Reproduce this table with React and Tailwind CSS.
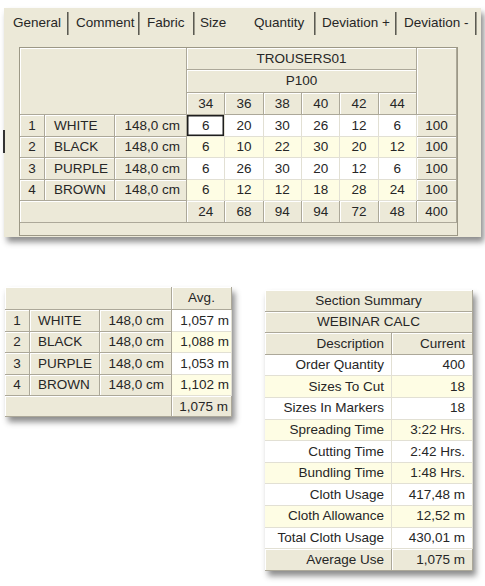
import React from 'react';

const sizes = ['34', '36', '38', '40', '42', '44'];

const rows = [
  { n: 1, name: 'WHITE', len: '148,0 cm', q: [6, 20, 30, 26, 12, 6], total: 100, avg: '1,057 m' },
  { n: 2, name: 'BLACK', len: '148,0 cm', q: [6, 10, 22, 30, 20, 12], total: 100, avg: '1,088 m' },
  { n: 3, name: 'PURPLE', len: '148,0 cm', q: [6, 26, 30, 20, 12, 6], total: 100, avg: '1,053 m' },
  { n: 4, name: 'BROWN', len: '148,0 cm', q: [6, 12, 12, 18, 28, 24], total: 100, avg: '1,102 m' },
];

const totals = [24, 68, 94, 94, 72, 48];

const summary = [
  ['Order Quantity', '400'],
  ['Sizes To Cut', '18'],
  ['Sizes In Markers', '18'],
  ['Spreading Time', '3:22 Hrs.'],
  ['Cutting Time', '2:42 Hrs.'],
  ['Bundling Time', '1:48 Hrs.'],
  ['Cloth Usage', '417,48 m'],
  ['Cloth Allowance', '12,52 m'],
  ['Total Cloth Usage', '430,01 m'],
];

const tabs = [
  { label: 'General', w: 'w-[54px]', ml: 'ml-0', sep: true },
  { label: 'Comment', w: 'w-[62px]', ml: 'ml-[7px]', sep: true },
  { label: 'Fabric', w: 'w-[46px]', ml: 'ml-[7px]', sep: true },
  { label: 'Size', w: 'w-[54px]', ml: 'ml-[5px]', sep: false },
  { label: 'Quantity', w: 'w-[60px]', ml: 'ml-0', sep: true },
  { label: 'Deviation +', w: 'w-[73px]', ml: 'ml-[6px]', sep: true },
  { label: 'Deviation -', w: 'w-[71px]', ml: 'ml-[7px]', sep: true },
];

const raised = 'bg-[#ECE9D8] border-r border-b border-[#ACA899] shadow-[inset_1px_1px_0_#ffffff] flex items-center';
const white = 'bg-white border-r border-b border-[#E2E0D4] flex items-center';
const yellow = 'bg-[#FEFDE4] border-r border-b border-[#E2E0D4] flex items-center';

const App = () => {
  return (
    <div className="relative w-[485px] h-[586px] bg-white overflow-hidden font-['Liberation_Sans',Arial,sans-serif] text-[13.5px] text-[#262626] leading-none">
      {/* caret left of the grid */}
      <div className="absolute left-[3px] top-[130px] w-[2px] h-[23px] bg-[#333]" />

      {/* quantity tab page */}
      <div className="ml-[4px] mt-[8px] w-[477px] bg-[#ECE9D8] shadow-[3px_5px_6px_rgba(0,0,0,0.45)] pb-[1px]">
        <div className="flex items-start h-[27px] pl-[9px] pt-[4px]">
          {tabs.map((t) => (
            <div key={t.label} className={`flex items-start ${t.ml}`}>
              <div className={`${t.w} h-[22px] flex items-center whitespace-nowrap`}>{t.label}</div>
              {t.sep && <div className="w-[2px] h-[23px] bg-[#5b5a52] border-r border-[#9b998c]" />}
            </div>
          ))}
        </div>

        <div className="ml-[15px] mt-[12px] w-[439px] border border-[#9c9886] grid grid-cols-[25px_70px_72px_repeat(6,38.33px)_40px] grid-rows-[22px_23px_22px_repeat(5,21.6px)_12px]">
          <div className={`${raised} col-span-3 row-span-3`} />
          <div className={`${raised} col-span-6 justify-center`}>TROUSERS01</div>
          <div className={`${raised} row-span-3`} />
          <div className={`${raised} col-span-6 justify-center`}>P100</div>
          {sizes.map((s) => (
            <div key={s} className={`${raised} justify-center`}>{s}</div>
          ))}

          {rows.map((r, i) => (
            <React.Fragment key={r.n}>
              <div className={`${raised} justify-center`}>{r.n}</div>
              <div className={`${raised} pl-[9px]`}>{r.name}</div>
              <div className={`${raised} justify-end pr-[6px]`}>{r.len}</div>
              {r.q.map((v, j) => (
                <div
                  key={j}
                  className={`${i % 2 === 0 ? white : yellow} justify-center ${
                    i === 0 && j === 0 ? 'shadow-[inset_0_0_0_1.5px_#1e1e1e]' : ''
                  }`}
                >
                  {v}
                </div>
              ))}
              <div className={`${raised} justify-center`}>{r.total}</div>
            </React.Fragment>
          ))}

          <div className={`${raised} col-span-3`} />
          {totals.map((v, j) => (
            <div key={j} className={`${raised} justify-center`}>{v}</div>
          ))}
          <div className={`${raised} justify-center`}>400</div>
          <div className="col-span-10 bg-[#ECE9D8]" />
        </div>
      </div>

      <div className="flex items-start mt-[50px]">
        {/* average usage per colour */}
        <div className="ml-[5px] grid grid-cols-[25px_70px_72px_60px] grid-rows-[23px_repeat(4,21.6px)_21px] bg-[#ECE9D8] shadow-[3px_5px_6px_rgba(0,0,0,0.45)]">
          <div className={`${raised} col-span-3`} />
          <div className={`${raised} justify-center`}>Avg.</div>
          {rows.map((r, i) => (
            <React.Fragment key={r.n}>
              <div className={`${raised} justify-center`}>{r.n}</div>
              <div className={`${raised} pl-[8px]`}>{r.name}</div>
              <div className={`${raised} justify-end pr-[7px]`}>{r.len}</div>
              <div className={`${i % 2 === 0 ? white : yellow} justify-end pr-[2px]`}>{r.avg}</div>
            </React.Fragment>
          ))}
          <div className={`${raised} col-span-3`} />
          <div className={`${raised} justify-end pr-[3px]`}>1,075 m</div>
        </div>

        {/* section summary */}
        <div className="ml-[33px] mt-[3px] grid grid-cols-[127px_81px] auto-rows-[21.6px] bg-[#ECE9D8] shadow-[3px_5px_6px_rgba(0,0,0,0.45)]">
          <div className={`${raised} col-span-2 justify-center`}>Section Summary</div>
          <div className={`${raised} col-span-2 justify-center`}>WEBINAR CALC</div>
          <div className={`${raised} justify-end pr-[7px]`}>Description</div>
          <div className={`${raised} justify-end pr-[7px]`}>Current</div>
          {summary.map(([d, v], i) => (
            <React.Fragment key={d}>
              <div className={`${i % 2 === 0 ? white : yellow} justify-end pr-[7px] whitespace-nowrap`}>{d}</div>
              <div className={`${i % 2 === 0 ? white : yellow} justify-end pr-[7px] whitespace-nowrap`}>{v}</div>
            </React.Fragment>
          ))}
          <div className={`${raised} justify-end pr-[7px]`}>Average Use</div>
          <div className={`${raised} justify-end pr-[7px]`}>1,075 m</div>
        </div>
      </div>
    </div>
  );
};

export default App;
